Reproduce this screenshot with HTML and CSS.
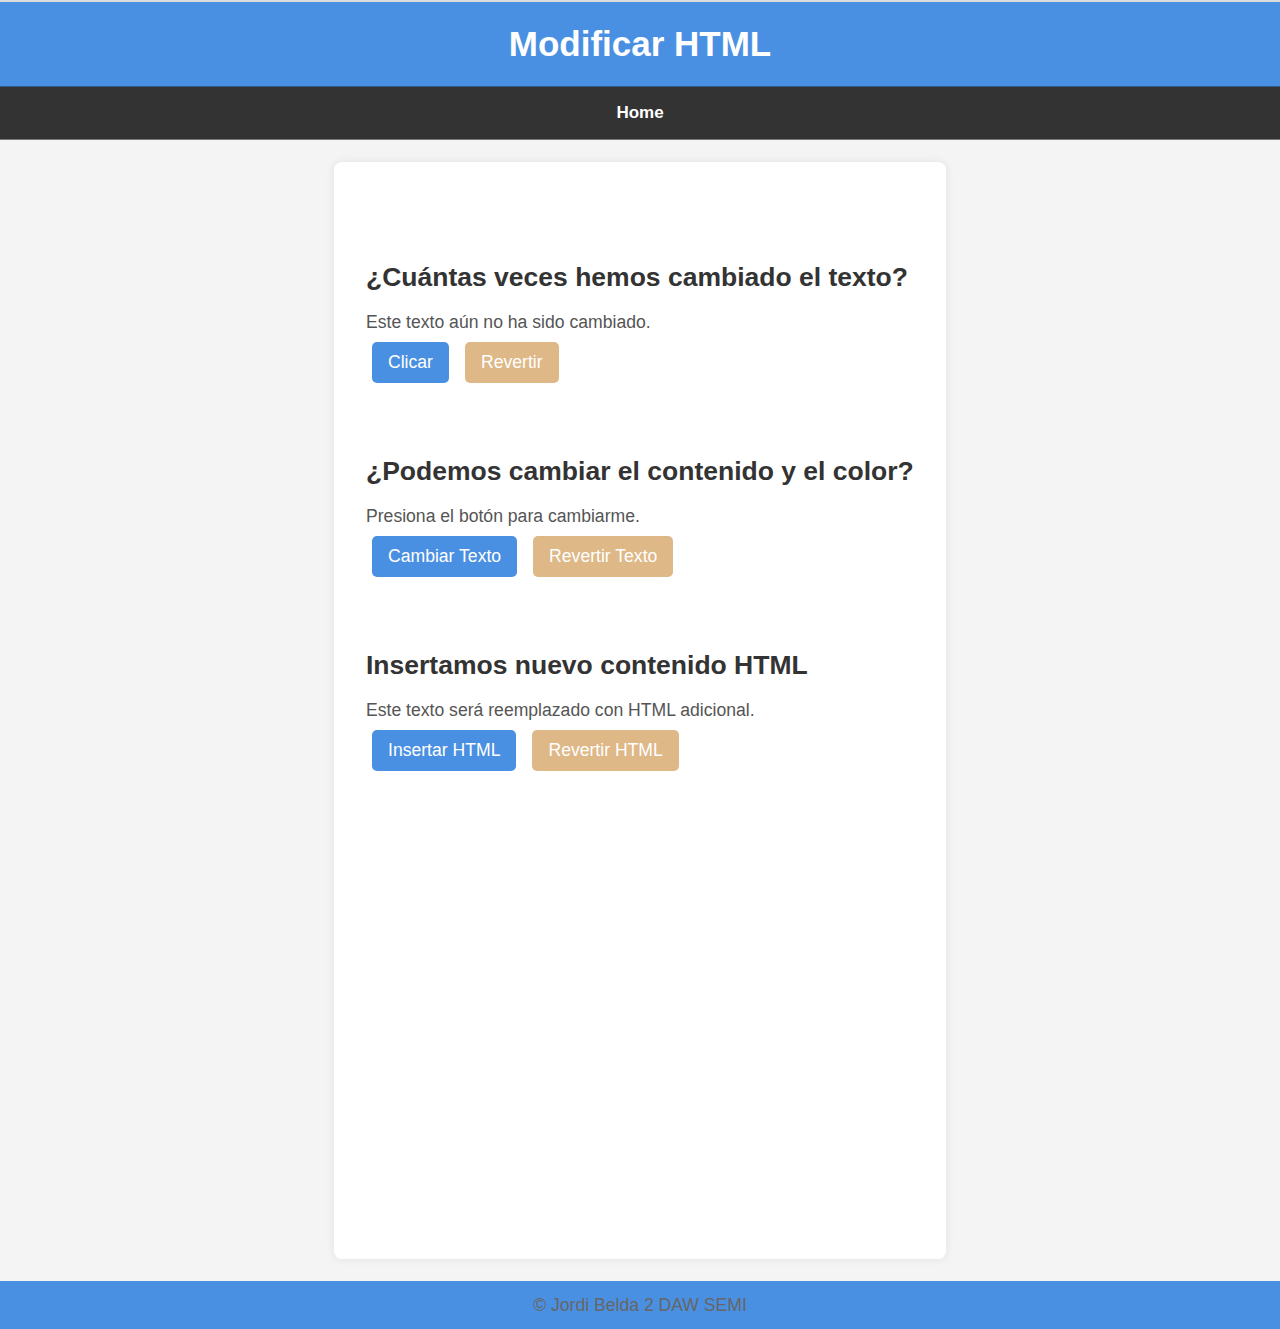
FILE: index.html
```html
<!DOCTYPE html>
<html lang="es">
<head>
<meta charset="utf-8">
<title>Modificar HTML</title>
<link rel="stylesheet" href="styles.css">
</head>
<body>
<div class="topline"></div>
<header class="header"><h1 class="title">Modificar HTML</h1></header>
<nav class="nav"><a class="nav-link" href="#">Home</a></nav>
<main class="main">
  <div class="card">
    <section class="section">
      <h2 class="section-title">¿Cuántas veces hemos cambiado el texto?</h2>
      <p class="section-text">Este texto aún no ha sido cambiado.</p>
      <div class="actions">
        <button class="btn btn-primary">Clicar</button>
        <button class="btn btn-secondary">Revertir</button>
      </div>
    </section>
    <section class="section">
      <h2 class="section-title">¿Podemos cambiar el contenido y el color?</h2>
      <p class="section-text">Presiona el botón para cambiarme.</p>
      <div class="actions">
        <button class="btn btn-primary">Cambiar Texto</button>
        <button class="btn btn-secondary">Revertir Texto</button>
      </div>
    </section>
    <section class="section">
      <h2 class="section-title">Insertamos nuevo contenido HTML</h2>
      <p class="section-text">Este texto será reemplazado con HTML adicional.</p>
      <div class="actions">
        <button class="btn btn-primary">Insertar HTML</button>
        <button class="btn btn-secondary">Revertir HTML</button>
      </div>
    </section>
  </div>
</main>
<footer class="footer">© Jordi Belda 2 DAW SEMI</footer>
</body>
</html>
```
FILE: styles.css
```css
* { box-sizing: border-box; }
html, body { margin: 0; padding: 0; }
body {
  font-family: "Liberation Sans", Arial, Helvetica, sans-serif;
  background: #f4f4f4;
  color: #333;
}
.topline { height: 2px; background: #dcdcdc; }
.header {
  background: #4a90e2;
  height: 84px;
  display: flex;
  align-items: center;
  justify-content: center;
}
.title {
  margin: 0;
  color: #fff;
  font-size: 35px;
  font-weight: bold;
}
.nav {
  background: #333;
  height: 54px;
  border-top: 1px solid #2e5a8a;
  border-bottom: 1px solid #777;
  display: flex;
  align-items: center;
  justify-content: center;
}
.nav-link {
  color: #fff;
  font-weight: bold;
  font-size: 17px;
  text-decoration: none;
}
.main {
  padding: 22px 0;
  display: flex;
  justify-content: center;
}
.card {
  width: 612px;
  min-height: 1097px;
  background: #fff;
  border-radius: 8px;
  box-shadow: 0 0 10px rgba(0,0,0,0.08);
  padding: 100px 33px 40px 32px;
}
.section { margin-bottom: 73px; }
.section-title {
  margin: 0 0 20px;
  font-size: 26.5px;
  line-height: 30px;
  font-weight: bold;
  color: #333;
  white-space: nowrap;
}
.section-text {
  margin: 0 0 10px;
  font-size: 17.6px;
  line-height: 20px;
  color: #555;
}
.actions {
  display: flex;
  gap: 16px;
  padding-left: 6px;
}
.btn {
  height: 41px;
  border: none;
  border-radius: 5px;
  padding: 0 16px;
  color: #fff;
  font-family: inherit;
  font-size: 17.6px;
}
.btn-primary { background: #4a90e2; }
.btn-secondary { background: #deb887; }
.footer {
  background: #4a90e2;
  height: 49px;
  display: flex;
  align-items: center;
  justify-content: center;
  color: #666;
  font-size: 17.6px;
}
```
